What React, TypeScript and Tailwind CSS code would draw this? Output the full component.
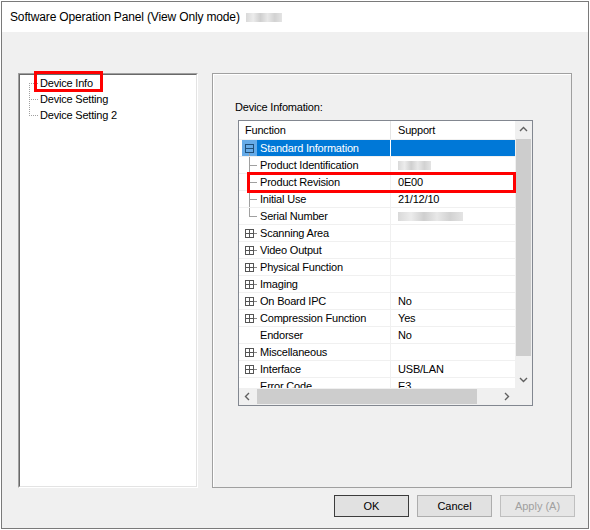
import React from 'react';

type Kind = 'open' | 'child' | 'last' | 'plus' | 'none';
interface Row {
  label: string;
  value?: string;
  kind: Kind;
  blur?: number;
  sel?: boolean;
}

const rows: Row[] = [
  { label: 'Standard Information', kind: 'open', sel: true },
  { label: 'Product Identification', kind: 'child', blur: 33 },
  { label: 'Product Revision', kind: 'child', value: '0E00' },
  { label: 'Initial Use', kind: 'child', value: '21/12/10' },
  { label: 'Serial Number', kind: 'last', blur: 65 },
  { label: 'Scanning Area', kind: 'plus' },
  { label: 'Video Output', kind: 'plus' },
  { label: 'Physical Function', kind: 'plus' },
  { label: 'Imaging', kind: 'plus' },
  { label: 'On Board IPC', kind: 'plus', value: 'No' },
  { label: 'Compression Function', kind: 'plus', value: 'Yes' },
  { label: 'Endorser', kind: 'none', value: 'No' },
  { label: 'Miscellaneous', kind: 'plus' },
  { label: 'Interface', kind: 'plus', value: 'USB/LAN' },
  { label: 'Error Code', kind: 'none', value: 'E3' },
];

function TreeLine({ pos }: { pos: 'first' | 'mid' | 'last' }) {
  const y1 = pos === 'first' ? 8 : 0;
  const y2 = pos === 'last' ? 9 : 16;
  return (
    <svg width="12" height="16" className="shrink-0" shapeRendering="crispEdges">
      <line x1="1.5" y1={y1} x2="1.5" y2={y2} stroke="#a0a0a0" strokeDasharray="1 1" />
      <line x1="3" y1="8.5" x2="11" y2="8.5" stroke="#a0a0a0" strokeDasharray="1 1" />
    </svg>
  );
}

function ListIcon({ kind, sel }: { kind: Kind; sel?: boolean }) {
  const line = '#a0a0a0';
  const ink = sel ? '#1f4f7a' : '#555555';
  return (
    <svg width="15" height="16" className="shrink-0" shapeRendering="crispEdges">
      {(kind === 'open' || kind === 'plus') && (
        <>
          <rect x="3.5" y="4.5" width="8" height="8" fill="none" stroke={ink} />
          <line x1="4" y1="8.5" x2="11" y2="8.5" stroke={ink} />
          {kind === 'plus' && <line x1="7.5" y1="5" x2="7.5" y2="12" stroke={ink} />}
          {kind === 'plus' && <line x1="12" y1="8.5" x2="15" y2="8.5" stroke="#8a8a8a" />}
          {kind === 'open' && <line x1="7.5" y1="13" x2="7.5" y2="16" stroke={line} />}
        </>
      )}
      {(kind === 'child' || kind === 'last') && (
        <>
          <line x1="7.5" y1="0" x2="7.5" y2={kind === 'last' ? 9 : 16} stroke={line} />
          <line x1="8" y1="8.5" x2="15" y2="8.5" stroke={line} />
        </>
      )}
    </svg>
  );
}

function Chevron({ dir }: { dir: 'up' | 'down' | 'left' | 'right' }) {
  const pts: Record<string, string> = {
    up: '5,10 8.5,6.5 12,10',
    down: '5,7 8.5,10.5 12,7',
    left: '10,5 6.5,8.5 10,12',
    right: '7,5 10.5,8.5 7,12',
  };
  return (
    <svg width="17" height="17" className="shrink-0">
      <polyline points={pts[dir]} fill="none" stroke="#606060" strokeWidth="1.4" />
    </svg>
  );
}

function Blur({ w }: { w: number }) {
  return (
    <div
      className="h-[9px] bg-[linear-gradient(90deg,#d9d9d9_0%,#ececec_20%,#cfcfcf_40%,#e8e8e8_60%,#d2d2d2_80%,#e4e4e4_100%)]"
      style={{ width: w }}
    />
  );
}

function ListRow({ r }: { r: Row }) {
  return (
    <div className="flex h-[17px] border-t border-[#f0f0f0] shrink-0">
      <div className="w-[151px] pl-[3px] flex items-center shrink-0">
        <div className={`h-[16px] flex items-center ${r.sel ? 'bg-[#66abe8]' : ''}`}>
          <ListIcon kind={r.kind} sel={r.sel} />
        </div>
        <div
          className={`flex-1 h-[16px] flex items-center pl-[3px] whitespace-nowrap ${
            r.sel ? 'bg-[#0078d7] text-white' : 'text-black'
          }`}
        >
          {r.label}
        </div>
      </div>
      <div className={`w-[1px] h-[16px] shrink-0 ${r.sel ? 'bg-white' : 'bg-[#f0f0f0]'}`} />
      <div
        className={`flex-1 h-[16px] flex items-center pl-[7px] whitespace-nowrap ${
          r.sel ? 'bg-[#0078d7] text-white' : 'text-black'
        }`}
      >
        {r.blur ? <Blur w={r.blur} /> : r.value}
      </div>
    </div>
  );
}

function Button({ label, variant }: { label: string; variant: 'default' | 'normal' | 'disabled' }) {
  const cls =
    variant === 'default'
      ? 'border-[#3c3c3c] bg-[#e1e1e1] text-black'
      : variant === 'normal'
      ? 'border-[#adadad] bg-[#e1e1e1] text-black'
      : 'border-[#bfbfbf] bg-[#e6e6e6] text-[#a0a0a0]';
  return (
    <div className={`w-[75px] h-[22px] border flex items-center justify-center text-[11px] ${cls}`}>{label}</div>
  );
}

export default function App() {
  return (
    <div className="w-[590px] h-[530px] bg-white p-[1px] font-['Liberation_Sans',Arial,sans-serif]">
      <div className="w-[588px] h-[528px] border border-[#7a7a7a] flex flex-col">
        {/* Title bar */}
        <div className="h-[30px] bg-white flex items-center pl-[8px] shrink-0">
          <span className="text-[12px] tracking-[-0.15px] text-black">Software Operation Panel (View Only mode)</span>
          <div className="ml-[6px] mt-[1px]">
            <Blur w={36} />
          </div>
        </div>

        {/* Body */}
        <div className="flex-1 bg-[#f0f0f0] pt-[41px] px-[16px] flex flex-col">
          <div className="h-[415px] flex gap-[14px] shrink-0">
            {/* Left tree panel */}
            <div className="relative w-[180px] h-full border border-t-[#a0a0a0] border-l-[#a0a0a0] border-r-white border-b-white">
              <div className="w-full h-full bg-white border border-t-[#696969] border-l-[#696969] border-r-[#e3e3e3] border-b-[#e3e3e3] text-[11px] tracking-[-0.2px] text-black">
                <div className="flex flex-col">
                  {(['Device Info', 'Device Setting', 'Device Setting 2'] as const).map((t, i) => (
                    <div key={t} className="h-[16px] flex items-center pl-[8px]">
                      <TreeLine pos={i === 0 ? 'first' : i === 2 ? 'last' : 'mid'} />
                      <span className="whitespace-nowrap leading-[16px]">{t}</span>
                    </div>
                  ))}
                </div>
              </div>
              <div className="absolute left-[15px] top-[-3px] w-[69px] h-[21px] border-[3px] border-[#ff0000]" />
            </div>

            {/* Right group box */}
            <div className="w-[360px] h-full border border-[#a0a0a0] shadow-[inset_1px_1px_0_#ffffff] pt-[26px]">
              <div className="ml-[22px] h-[14px] leading-[14px] text-[11px] tracking-[-0.2px] text-black">
                Device Infomation:
              </div>
              <div className="relative ml-[25px] mt-[6px] w-[295px] h-[286px] border border-[#828790] bg-white flex flex-col text-[11px] tracking-[-0.2px]">
                <div className="h-[267px] flex shrink-0">
                  <div className="w-[276px] h-full flex flex-col overflow-hidden">
                    {/* Header */}
                    <div className="h-[18px] flex shrink-0 bg-white">
                      <div className="w-[151px] pl-[6px] flex items-center">Function</div>
                      <div className="w-[1px] h-full bg-[#e5e5e5]" />
                      <div className="flex-1 pl-[7px] flex items-center">Support</div>
                    </div>
                    {rows.map((r) => (
                      <ListRow key={r.label} r={r} />
                    ))}
                  </div>
                  {/* Vertical scrollbar */}
                  <div className="w-[17px] h-full bg-[#f0f0f0] flex flex-col">
                    <Chevron dir="up" />
                    <div className="flex-1 pt-[1px] px-[1px]">
                      <div className="w-[15px] h-[217px] bg-[#cdcdcd]" />
                    </div>
                    <Chevron dir="down" />
                  </div>
                </div>
                {/* Horizontal scrollbar */}
                <div className="h-[17px] flex shrink-0">
                  <div className="w-[276px] h-full bg-[#f0f0f0] flex items-center">
                    <Chevron dir="left" />
                    <div className="flex-1 h-full py-[1px] pl-[1px]">
                      <div className="w-[220px] h-[15px] bg-[#cdcdcd]" />
                    </div>
                    <Chevron dir="right" />
                  </div>
                  <div className="w-[17px] h-full bg-[#f0f0f0]" />
                </div>
                <div className="absolute left-[8px] top-[51px] w-[269px] h-[21px] border-[3px] border-[#ff0000]" />
              </div>
            </div>
          </div>

          {/* Buttons */}
          <div className="mt-[7px] mr-[-3px] flex justify-end gap-[8px]">
            <Button label="OK" variant="default" />
            <Button label="Cancel" variant="normal" />
            <Button label="Apply (A)" variant="disabled" />
          </div>
        </div>
      </div>
    </div>
  );
}
